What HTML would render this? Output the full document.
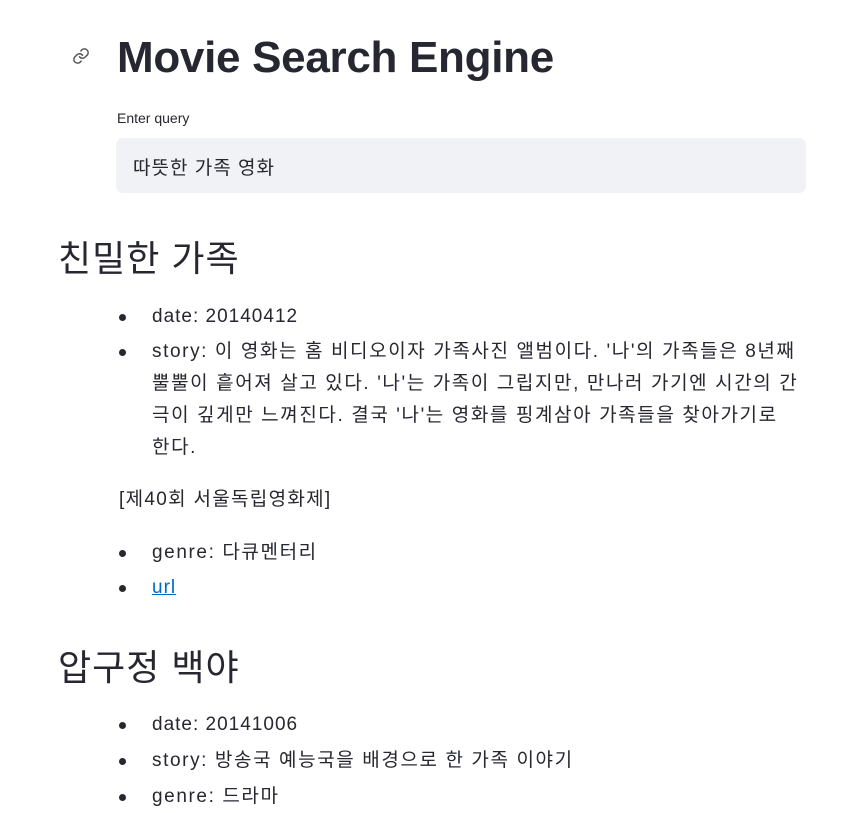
<!DOCTYPE html>
<html><head><meta charset="utf-8"><style>
body{margin:0;width:857px;height:812px;overflow:hidden;background:#fff;color:#262730;font-family:"Liberation Sans","Noto Sans CJK KR",sans-serif;}
.a{position:absolute;white-space:nowrap;}
h1{position:absolute;left:117px;top:28px;margin:0;font-size:44px;font-weight:700;line-height:60px;letter-spacing:-0.3px;}
.lbl{left:117px;top:110px;font-size:14px;}
.inp{position:absolute;left:116px;top:138px;width:690px;height:55px;background:#f0f2f6;border-radius:7px;}
.inp span{position:absolute;left:17px;top:15px;font-size:19px;letter-spacing:1px;}
h2{position:absolute;left:58px;margin:0;font-size:36px;font-weight:400;line-height:48px;letter-spacing:1px;}
.li{position:absolute;left:152px;font-size:19px;line-height:32px;letter-spacing:1px;white-space:nowrap;}
.li:before{content:"";position:absolute;left:-33px;top:13px;width:7px;height:7px;border-radius:50%;background:#262730;}
.k{letter-spacing:1.6px;}
.p{position:absolute;left:119px;font-size:19px;line-height:32px;letter-spacing:1.3px;}
a{color:#0068c9;}
</style></head><body>
<svg class="a" style="left:72px;top:47px" width="18" height="18" viewBox="0 0 24 24" fill="none" stroke="#555" stroke-width="2" stroke-linecap="round"><path d="M10 13a5 5 0 0 0 7.5.5l3-3a5 5 0 0 0-7-7l-1.7 1.7"/><path d="M14 11a5 5 0 0 0-7.5-.5l-3 3a5 5 0 0 0 7 7l1.7-1.7"/></svg>
<h1>Movie Search Engine</h1>
<div class="a lbl">Enter query</div>
<div class="inp"><span>따뜻한 가족 영화</span></div>
<h2 style="top:235px">친밀한 가족</h2>
<div class="li" style="top:301px">date: 20140412</div>
<div class="li k" style="top:336px">story: 이 영화는 홈 비디오이자 가족사진 앨범이다. '나'의 가족들은 8년째<br>뿔뿔이 흩어져 살고 있다. '나'는 가족이 그립지만, 만나러 가기엔 시간의 간<br>극이 깊게만 느껴진다. 결국 '나'는 영화를 핑계삼아 가족들을 찾아가기로<br>한다.</div>
<div class="p" style="top:484px">[제40회 서울독립영화제]</div>
<div class="li k" style="top:537px">genre: 다큐멘터리</div>
<div class="li" style="top:572px"><a href="#">url</a></div>
<h2 style="top:644px">압구정 백야</h2>
<div class="li" style="top:709px">date: 20141006</div>
<div class="li k" style="top:745px">story: 방송국 예능국을 배경으로 한 가족 이야기</div>
<div class="li k" style="top:781px">genre: 드라마</div>
</body></html>
